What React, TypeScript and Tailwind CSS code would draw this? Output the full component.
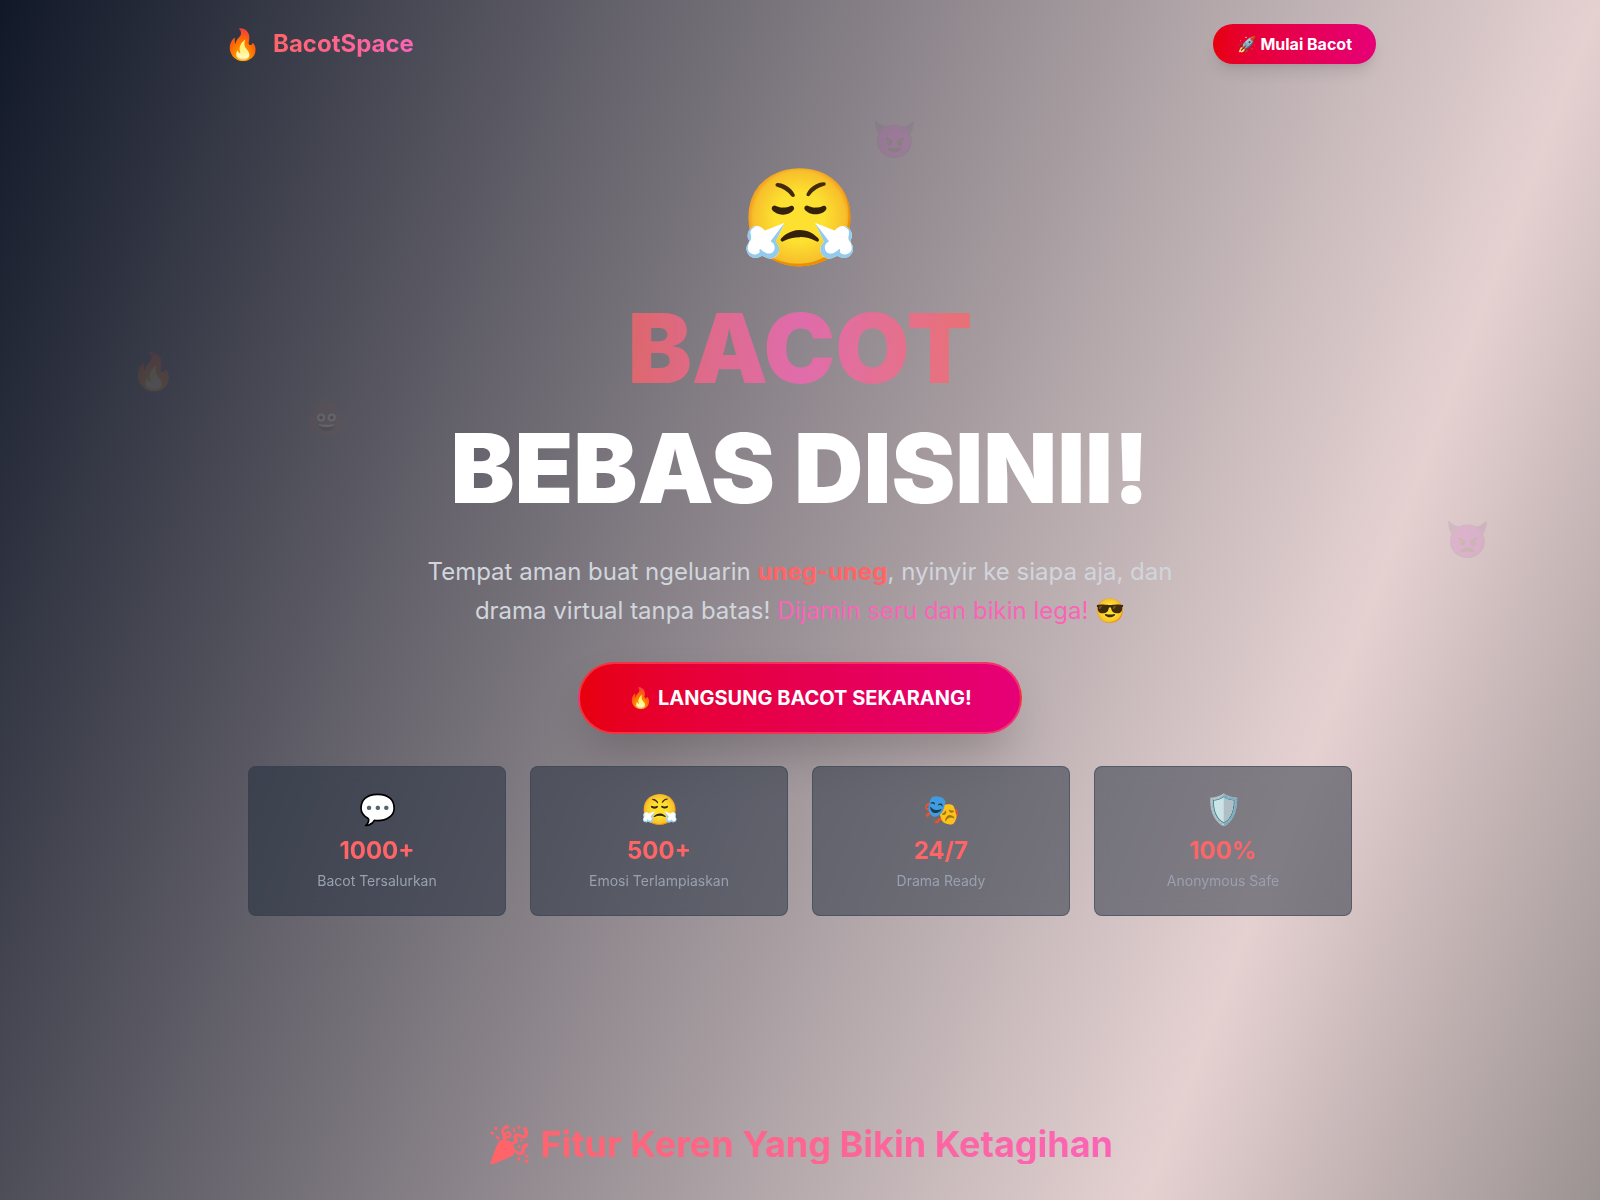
const floaters = [
  { emoji: '😈', place: 'left-[54.5%] top-[119px]' },
  { emoji: '🔥', place: 'left-[8.2%] top-[351px]' },
  { emoji: '💩', place: 'left-[19%] top-[395px]' },
  { emoji: '👿', place: 'left-[90.3%] top-[519px]' },
];

const stats = [
  { emoji: '💬', value: '1000+', label: 'Bacot Tersalurkan' },
  { emoji: '😤', value: '500+', label: 'Emosi Terlampiaskan' },
  { emoji: '🎭', value: '24/7', label: 'Drama Ready' },
  { emoji: '🛡️', value: '100%', label: 'Anonymous Safe' },
];

function Floaters() {
  return (
    <div aria-hidden="true" className="pointer-events-none absolute inset-0 overflow-hidden">
      {floaters.map((f) => (
        <span key={f.emoji} className={`absolute text-4xl opacity-10 ${f.place}`}>
          {f.emoji}
        </span>
      ))}
    </div>
  );
}

function Header() {
  return (
    <header className="relative p-6">
      <nav className="mx-auto flex max-w-6xl items-center justify-between">
        <a href="#" className="flex items-center gap-3">
          <span className="text-3xl">🔥</span>
          <span className="bg-gradient-to-r from-red-400 to-pink-400 bg-clip-text text-2xl font-bold text-transparent">
            BacotSpace
          </span>
        </a>
        <button
          type="button"
          className="rounded-full bg-gradient-to-r from-red-600 to-pink-600 px-6 py-2 font-bold shadow-lg"
        >
          🚀 Mulai Bacot
        </button>
      </nav>
    </header>
  );
}

function Hero() {
  return (
    <section className="relative px-6 py-20">
      <div className="mx-auto flex max-w-6xl flex-col items-center px-6 text-center">
        <div className="mb-6 text-8xl leading-none">😤</div>
        <h1 className="mb-6 text-8xl leading-tight font-black">
          <span className="mx-auto block w-fit bg-gradient-to-r from-red-400 via-pink-400 to-red-400 bg-clip-text text-transparent opacity-75">
            BACOT
          </span>
          <span className="block">BEBAS DISINII!</span>
        </h1>
        <p className="mb-8 max-w-3xl text-2xl leading-relaxed text-gray-300">
          Tempat aman buat ngeluarin <strong className="font-bold text-red-400">uneg-uneg</strong>, nyinyir ke
          siapa aja, dan drama virtual tanpa batas!{' '}
          <span className="text-pink-400">Dijamin seru dan bikin lega!</span> 😎
        </p>
        <button
          type="button"
          className="mb-8 rounded-full border-2 border-red-400/50 bg-gradient-to-r from-red-600 to-pink-600 px-12 py-5 text-xl font-bold shadow-2xl"
        >
          🔥 LANGSUNG BACOT SEKARANG!
        </button>
        <div className="grid w-full grid-cols-2 gap-6 md:grid-cols-4">
          {stats.map((s) => (
            <div
              key={s.label}
              className="rounded-lg border border-gray-700/50 bg-gray-800/50 p-6 backdrop-blur-sm"
            >
              <div className="mb-2 text-3xl">{s.emoji}</div>
              <div className="mb-1 text-2xl font-bold text-red-400">{s.value}</div>
              <div className="text-sm text-gray-400">{s.label}</div>
            </div>
          ))}
        </div>
      </div>
    </section>
  );
}

function Features() {
  return (
    <section className="relative px-6 pt-32 pb-9 text-center">
      <h2 className="inline-block bg-gradient-to-r from-red-400 to-pink-400 bg-clip-text text-4xl font-bold text-transparent">
        🎉 Fitur Keren Yang Bikin Ketagihan
      </h2>
    </section>
  );
}

export default function App() {
  return (
    <div className="relative min-h-screen bg-gradient-to-br from-gray-900 via-red-900/20 to-black bg-[length:100%_4220px] bg-no-repeat font-['Inter',sans-serif] text-white">
      <Floaters />
      <Header />
      <Hero />
      <Features />
    </div>
  );
}
